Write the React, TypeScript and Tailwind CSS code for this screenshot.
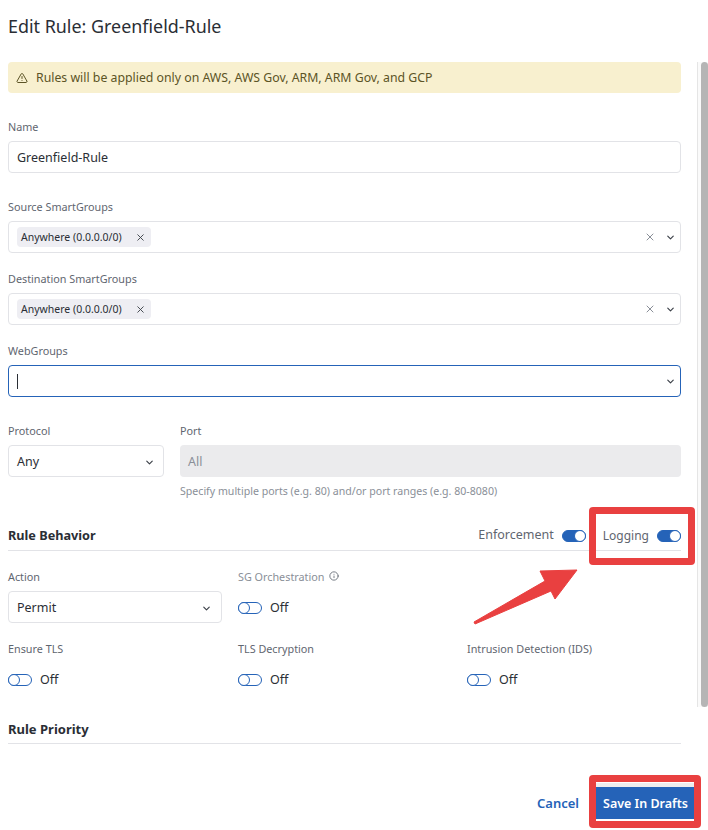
import React from 'react';
import { ChevronDown, Info, TriangleAlert, X } from 'lucide-react';

const Label = ({ children, className = '' }: { children: React.ReactNode; className?: string }) => (
  <div className={`text-[10.8px] leading-[14px] text-[#5f6670] ${className}`}>{children}</div>
);

const Chevron = () => <ChevronDown size={11} strokeWidth={2.5} className="text-[#3a3f47]" />;

const Toggle = ({ on = false }: { on?: boolean }) => (
  <span
    className={`flex h-3 w-6 items-center rounded-full border border-[#2563b8] ${on ? 'justify-end bg-[#2563b8]' : 'justify-start bg-white'}`}
  >
    <span className="-m-px h-3 w-3 rounded-full border border-[#2563b8] bg-white" />
  </span>
);

const OffToggle = () => (
  <div className="flex h-[16px] items-center gap-2 text-[12.5px] text-[#2a2e35]">
    <Toggle />
    Off
  </div>
);

const GroupSelect = ({ label }: { label: string }) => (
  <div>
    <Label>{label}</Label>
    <div className="mt-[7px] flex h-8 items-center rounded border border-[#e2e3e7] pl-2 pr-[4px]">
      <span className="flex h-5 items-center gap-[13px] rounded bg-[#eeeef3] pl-1 pr-[5px] pt-px text-[10.5px] text-[#2a2e35]">
        Anywhere (0.0.0.0/0)
        <X size={11} className="text-[#3a3f47]" />
      </span>
      <X size={12} className="ml-auto mr-[9px] text-[#8a8f98]" />
      <Chevron />
    </div>
  </div>
);

export default function App() {
  return (
    <div className="relative h-[830px] w-[708px] overflow-hidden bg-white font-['Noto_Sans',sans-serif]">
      <div className="flex h-[775px]">
        <main className="w-[681px] shrink-0 pl-2">
          <h1 className="pt-[15px] pb-px text-[17.9px] leading-[22px] text-[#2a2e35]">Edit Rule: Greenfield-Rule</h1>

          <div className="mt-[24px] flex h-[31px] items-center gap-[8px] rounded bg-[#f8f0cf] px-2 pt-px text-[12.3px] text-[#5c5426]">
            <TriangleAlert size={12} />
            Rules will be applied only on AWS, AWS Gov, ARM, ARM Gov, and GCP
          </div>

          <Label className="mt-[27px]">Name</Label>
          <div className="mt-[7px] flex h-8 items-center rounded border border-[#e2e3e7] px-2 pt-[2px] text-[12.5px] text-[#2a2e35]">
            Greenfield-Rule
          </div>

          <div className="mt-[27px]">
            <GroupSelect label="Source SmartGroups" />
          </div>
          <div className="mt-[19px]">
            <GroupSelect label="Destination SmartGroups" />
          </div>

          <Label className="mt-[19px]">WebGroups</Label>
          <div className="mt-[7px] flex h-8 items-center justify-between rounded border border-[#2563b8] pl-2 pr-[4px]">
            <span className="h-[15px] w-px bg-[#2a2e35]" />
            <Chevron />
          </div>

          <div className="mt-[27px] flex gap-4">
            <div className="w-[156px]">
              <Label>Protocol</Label>
              <div className="mt-[7px] flex h-8 items-center justify-between rounded border border-[#e2e3e7] pl-2 pr-[8px] pt-[2px] text-[12.5px] text-[#2a2e35]">
                Any
                <Chevron />
              </div>
            </div>
            <div className="flex-1">
              <Label>Port</Label>
              <div className="mt-[7px] flex h-8 items-center rounded bg-[#ebebed] px-2 pt-[2px] text-[12.5px] text-[#8a8f98]">All</div>
              <div className="mt-[7px] text-[10.6px] leading-[14px] text-[#8a8f98]">
                Specify multiple ports (e.g. 80) and/or port ranges (e.g. 80-8080)
              </div>
            </div>
          </div>

          <div className="mt-[23px] flex h-[30px] items-center border-b border-[#e2e3e7]">
            <span className="text-[12.7px] font-bold text-[#2a2e35]">Rule Behavior</span>
            <span className="ml-auto flex items-center gap-[8px] text-[12.5px] text-[#5f6670]">
              Enforcement
              <Toggle on />
            </span>
            <span className="ml-[17px] flex items-center gap-2 text-[12px] text-[#5f6670]">
              Logging
              <Toggle on />
            </span>
          </div>

          <div className="mt-[19px] grid grid-cols-[214px_213px_1fr] gap-x-4 gap-y-[19px]">
            <div>
              <Label>Action</Label>
              <div className="mt-[7px] flex h-8 items-center justify-between rounded border border-[#e2e3e7] pl-2 pr-[9px] pt-[2px] text-[12.5px] text-[#2a2e35]">
                Permit
                <Chevron />
              </div>
            </div>
            <div className="col-span-2">
              <Label className="flex items-center gap-[5px] text-[#8a8f98]">
                SG Orchestration
                <Info size={10} className="-mt-[2px] text-[#5f6670]" />
              </Label>
              <div className="mt-[16px]"><OffToggle /></div>
            </div>
            <div>
              <Label>Ensure TLS</Label>
              <div className="mt-[16px]"><OffToggle /></div>
            </div>
            <div>
              <Label>TLS Decryption</Label>
              <div className="mt-[16px]"><OffToggle /></div>
            </div>
            <div>
              <Label>Intrusion Detection (IDS)</Label>
              <div className="mt-[16px]"><OffToggle /></div>
            </div>
          </div>

          <div className="mt-[32px] border-b border-[#e2e3e7] pb-[5px] text-[13px] font-bold leading-[18px] text-[#2a2e35]">
            Rule Priority
          </div>
        </main>
        <div className="ml-auto mt-[62px] h-[645px] w-[11px] border-l border-[#e5e5e5] bg-[#fafafa] pl-[3px]">
          <div className="h-full rounded-t-md rounded-b-md bg-[#b5b5b5]" />
        </div>
      </div>

      <footer className="flex items-center justify-end pr-[14px] pt-[8px]">
        <span className="mr-[17px] pt-px text-[13px] font-semibold text-[#2563b8]">Cancel</span>
        <div className="border-y-[4px] border-t-[#eeeeee] border-b-white">
          <button className="h-8 w-[98px] bg-[#2563b8] pl-px pt-[2px] text-[12.5px] font-semibold text-white">Save In Drafts</button>
        </div>
      </footer>

      {/* annotation marks drawn over the screenshot */}
      <div className="absolute left-[589px] top-[507px] h-[58px] w-[106px] rounded border-[7px] border-[#e94040]" />
      <div className="absolute left-[589px] top-[775px] h-[53px] w-[112px] rounded border-[7px] border-[#e94040]" />
      <svg className="absolute left-[470px] top-[565px]" width="112" height="60" viewBox="0 0 112 60">
        <polygon points="4,57 75,16 70,6 107,5 85,34 81,26 5,59" fill="#e94040" stroke="#e94040" strokeWidth="1" strokeLinejoin="round" />
      </svg>
    </div>
  );
}
